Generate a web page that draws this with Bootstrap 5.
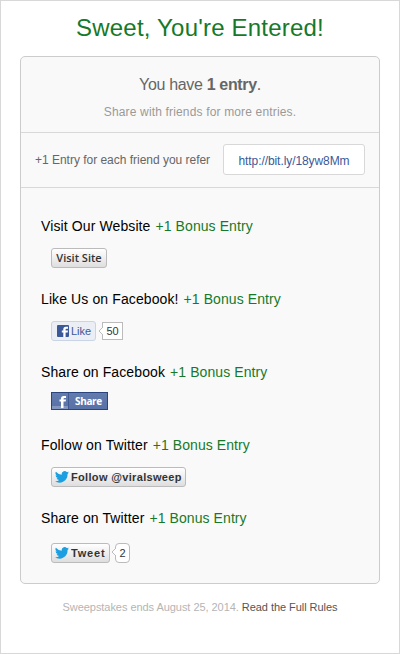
<!DOCTYPE html>
<html lang="en">
<head>
<meta charset="utf-8">
<title>Sweet, You're Entered!</title>
<link href="https://cdn.jsdelivr.net/npm/bootstrap@5.3.0/dist/css/bootstrap.min.css" rel="stylesheet">
<style>
body{font-family:"Liberation Sans",Arial,sans-serif;font-size:14px;line-height:16px;color:#000;background:#fff}
.frame{height:654px;border:1px solid #d8d8d8;padding:0 19px}
.frame *{white-space:nowrap}
.title{font-size:24px;line-height:28px;letter-spacing:.2px;color:#16792a;padding-top:13px;margin-bottom:14px}
.panel{height:528px;background:#f9f9f9;border:1px solid #ccc;border-radius:5px}
.summary{height:76px;border-bottom:1px solid #d8d8d8;color:#666;padding-top:19px}
.count{font-size:16px;line-height:18px;letter-spacing:-.33px}
.hint{font-size:12px;line-height:14px;color:#999;margin-top:11px;letter-spacing:.16px}
.refer{height:55px;border-bottom:1px solid #d8d8d8;font-size:12px;color:#666;padding:0 14px;letter-spacing:-.02px}
.short{width:142px;height:31px;margin-bottom:1px;border:1px solid #d8d8d8;border-radius:3px;background:#fff;color:#3b5998;padding-top:3px;letter-spacing:-.08px}
.tasks{padding:30px 20px 0}
.task{height:73px;letter-spacing:.11px}
.bonus{color:#16792a;margin-left:5px;letter-spacing:.08px}
.act{margin:14px 0 0 10px;font-size:11px;line-height:14px;letter-spacing:0}
.grey{height:20px;border:1px solid #bbb;border-radius:3px;background:linear-gradient(#fff,#dedede);color:#333;font-weight:bold}
.visit{width:56px;font-family:"Open Sans","Noto Sans",sans-serif;font-weight:600}
.like{width:45px;height:20px;border:1px solid #cad4e7;border-radius:3px;background:#eceef5;color:#3b5998;padding-left:5px}
.like span{margin-left:2px}
.bubble{position:relative;background:#fff;border:1px solid #bbb;height:18px;color:#333;margin-left:6px}
.bubble.fb{width:21px}
.bubble.twc{width:15px;height:20px;margin-left:5px}
.bubble svg{position:absolute;left:-4px;top:4px}
.act.up{margin-top:12px}
.act.down{margin-top:17px}
.fbshare{width:57px;height:18px;border:1px solid #29447e;background:linear-gradient(#637bad,#5872a7);color:#fff;font:bold 10px/14px "Open Sans","Noto Sans",sans-serif;letter-spacing:-.35px}
.fbshare span{margin-left:6px}
.tw{padding-left:3px;letter-spacing:.33px}
.tw span{margin-left:2px}
.follow{width:135px}
.tweet{width:59px;letter-spacing:.8px}
.foot{font-size:11px;line-height:14px;color:#b5b5b5;margin-top:16px;letter-spacing:-.05px}
.foot span{color:#555}
</style>
<script src="https://cdn.jsdelivr.net/npm/bootstrap@5.3.0/dist/js/bootstrap.bundle.min.js"></script>
</head>
<body>
<svg width="0" height="0" class="d-none"><symbol id="bird" viewBox="0 0 24 20"><path fill="#1b9fe0" d="M23.900 2.400a10 10 0 0 1-2.800.8A5 5 0 0 0 23.200.4a10 10 0 0 1-3.100 1.200A4.900 4.900 0 0 0 11.700 6.100 14 14 0 0 1 1.600.9a4.900 4.900 0 0 0 1.500 6.600A5 5 0 0 1 .9 6.900a4.900 4.900 0 0 0 3.900 4.900 5 5 0 0 1-2.200.1 4.900 4.900 0 0 0 4.600 3.400A9.900 9.900 0 0 1 0 17.300a14 14 0 0 0 21.500-12.400A10 10 0 0 0 23.900 2.400z"/></symbol></svg>
<main class="frame">
<h1 class="title text-center fw-normal">Sweet, You're Entered!</h1>
<section class="panel">
<div class="summary text-center"><div class="count">You have <b>1 entry</b>.</div><div class="hint">Share with friends for more entries.</div></div>
<div class="refer d-flex align-items-center justify-content-between"><span>+1 Entry for each friend you refer</span><div class="short d-flex align-items-center justify-content-center">http://bit.ly/18yw8Mm</div></div>
<div class="tasks">
<div class="task"><div>Visit Our Website<span class="bonus">+1 Bonus Entry</span></div>
<div class="act d-flex"><div class="grey visit d-flex align-items-center justify-content-center">Visit Site</div></div></div>
<div class="task"><div>Like Us on Facebook!<span class="bonus">+1 Bonus Entry</span></div>
<div class="act d-flex align-items-center"><div class="like d-flex align-items-center"><svg width="12" height="12" viewBox="0 0 12 12"><rect width="12" height="12" rx="1" fill="#3b5998"/><path fill="#fff" d="M6.300 12V7.500H4.800V5.500h1.500V4.200Q6.300 1.700 8.800 1.700H11v2.100H9.500q-.9 0-.9.800v.9H11l-.3 2H8.600V12z"/></svg><span>Like</span></div>
<div class="bubble fb d-flex align-items-center justify-content-center">50<svg width="4" height="8"><path d="M4 0 0 4 4 8" fill="#fff" stroke="#bbb"/></svg></div></div></div>
<div class="task"><div>Share on Facebook<span class="bonus">+1 Bonus Entry</span></div>
<div class="act up d-flex"><div class="fbshare d-flex align-items-center"><svg width="17" height="16" viewBox="0 0 17 16"><path fill="#8296bf" d="M0 13h16v3H0z"/><path fill="#fff" d="M9 15V8.500H7.500v-2H9V5.500Q9 3 11.500 3H14v2h-1.500q-1 0-1 1v.5H14l-.3 2h-2.200V15z"/><path stroke="#3f5890" d="M16.500 0v16"/></svg><span>Share</span></div></div></div>
<div class="task"><div>Follow on Twitter<span class="bonus">+1 Bonus Entry</span></div>
<div class="act d-flex"><div class="grey tw follow d-flex align-items-center"><svg width="14" height="12" viewBox="0 0 14 12"><use href="#bird"/></svg><span>Follow @viralsweep</span></div></div></div>
<div class="task"><div>Share on Twitter<span class="bonus">+1 Bonus Entry</span></div>
<div class="act down d-flex align-items-center"><div class="grey tw tweet d-flex align-items-center"><svg width="14" height="12" viewBox="0 0 14 12"><use href="#bird"/></svg><span>Tweet</span></div>
<div class="bubble twc rounded-1 d-flex align-items-center justify-content-center">2<svg width="4" height="8"><path d="M4 0 0 4 4 8" fill="#fff" stroke="#bbb"/></svg></div></div></div>
</div>
</section>
<footer class="foot text-center">Sweepstakes ends August 25, 2014. <span>Read the Full Rules</span></footer>
</main>
</body>
</html>
